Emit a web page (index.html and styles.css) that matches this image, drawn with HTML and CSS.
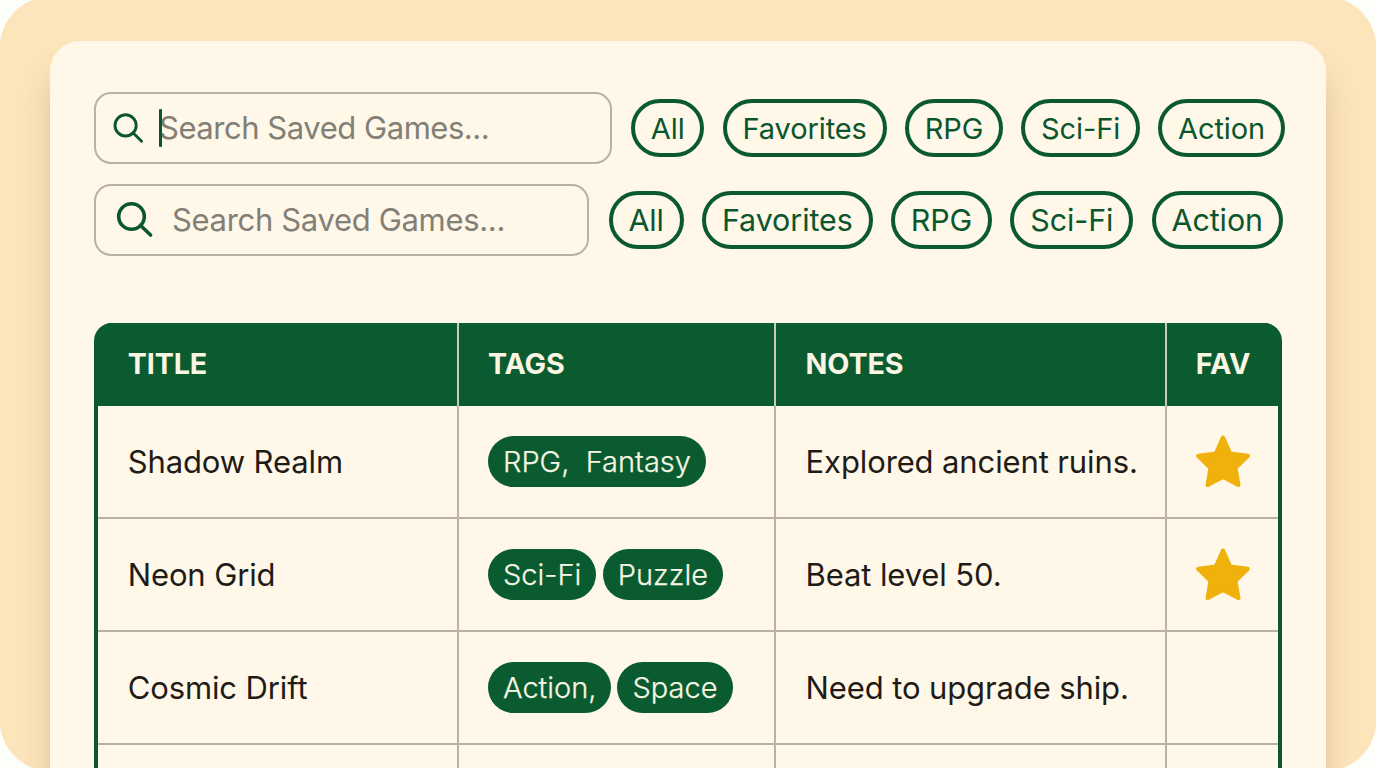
FILE: index.html
```html
<!DOCTYPE html>
<html lang="en">
<head>
<meta charset="utf-8">
<title>Saved Games</title>
<link rel="stylesheet" href="styles.css">
</head>
<body>
<div class="frame">
  <main class="panel">
    <div class="toolbar toolbar-active">
      <div class="search">
        <svg class="search-icon" viewBox="0 0 32 32"><circle cx="13.6" cy="13.4" r="10.6"/><path d="M21.2 21 29.6 29.2"/></svg>
        <span class="placeholder">Search Saved Games...<span class="caret"></span></span>
      </div>
      <div class="chips">
        <span class="chip">All</span>
        <span class="chip">Favorites</span>
        <span class="chip">RPG</span>
        <span class="chip">Sci-Fi</span>
        <span class="chip">Action</span>
      </div>
    </div>
    <div class="toolbar toolbar-large">
      <div class="search">
        <svg class="search-icon" viewBox="0 0 38 38"><circle cx="15.5" cy="15.5" r="12.8"/><path d="M24.8 24.8 34.6 34"/></svg>
        <span class="placeholder">Search Saved Games...</span>
      </div>
      <div class="chips">
        <span class="chip">All</span>
        <span class="chip">Favorites</span>
        <span class="chip">RPG</span>
        <span class="chip">Sci-Fi</span>
        <span class="chip">Action</span>
      </div>
    </div>
    <div class="table">
      <div class="row head">
        <div class="cell">TITLE</div><div class="cell">TAGS</div><div class="cell">NOTES</div><div class="cell fav">FAV</div>
      </div>
      <div class="row">
        <div class="cell">Shadow Realm</div>
        <div class="cell"><span class="tag">RPG,  Fantasy</span></div>
        <div class="cell">Explored ancient ruins.</div>
        <div class="cell fav"><svg class="star" viewBox="228 375 162 158"><path d="M309 383 330 431 383 438 346 474 355 525 309 501 263 525 272 474 235 438 288 431Z"/></svg></div>
      </div>
      <div class="row">
        <div class="cell">Neon Grid</div>
        <div class="cell"><span class="tag">Sci-Fi</span><span class="tag">Puzzle</span></div>
        <div class="cell">Beat level 50.</div>
        <div class="cell fav"><svg class="star" viewBox="228 375 162 158"><path d="M309 383 330 431 383 438 346 474 355 525 309 501 263 525 272 474 235 438 288 431Z"/></svg></div>
      </div>
      <div class="row">
        <div class="cell">Cosmic Drift</div>
        <div class="cell"><span class="tag tag-open">Action,</span><span class="tag">Space</span></div>
        <div class="cell">Need to upgrade ship.</div>
        <div class="cell fav"></div>
      </div>
      <div class="row">
        <div class="cell"></div><div class="cell"></div><div class="cell"></div><div class="cell fav"></div>
      </div>
    </div>
  </main>
</div>
</body>
</html>
```
FILE: styles.css
```css
* { box-sizing: border-box; }
html, body { height: 100%; }
body {
  margin: 0;
  overflow: hidden;
  background: #fcfff9;
  font-family: Inter, "Liberation Sans", sans-serif;
  color: #1f1c17;
}
.frame {
  height: 774px;
  margin-top: -3px;
  padding: 44px 50px 0;
  border-radius: 50px;
  background: #fce4bb;
  overflow: hidden;
}
.panel {
  height: 900px;
  padding: 51px 40px 0 44px;
  border-radius: 30px;
  background: #fff7e8;
  box-shadow: 0 30px 28px rgba(145, 110, 45, .27);
}
.toolbar { display: flex; align-items: center; height: 72px; }
.search {
  display: flex;
  flex: none;
  align-items: center;
  height: 72px;
  border: 2px solid #bab0a4;
  border-radius: 17px;
}
.search-icon {
  fill: none;
  stroke: #0a562e;
  stroke-linecap: round;
  flex: none;
}
.placeholder {
  position: relative;
  font-size: 31px;
  line-height: 38px;
  color: #827f76;
  white-space: nowrap;
}
.caret {
  position: absolute;
  left: 0;
  top: 0;
  width: 3px;
  height: 38px;
  border-radius: 1px;
  background: #0a562e;
}
.chips { display: flex; flex: none; gap: 18.3px; }
.chip {
  display: flex;
  align-items: center;
  height: 58px;
  padding: 0 15.8px;
  border: 4px solid #0a592f;
  border-radius: 29px;
  color: #0a562e;
  letter-spacing: -.1px;
  white-space: nowrap;
}
.toolbar-active .search { width: 518px; margin-right: 19px; padding-left: 16px; }
.toolbar-active .search-icon { width: 32px; height: 32px; margin-right: 15px; stroke-width: 2.9; }
.toolbar-active .placeholder { letter-spacing: -.46px; }
.toolbar-active .chip { font-size: 29px; }
.toolbar-large { margin-top: 19.5px; }
.toolbar-large .search { width: 495px; margin-right: 19.5px; padding-left: 19.5px; }
.toolbar-large .search-icon { width: 38px; height: 38px; margin-right: 18.5px; stroke-width: 3.6; }
.toolbar-large .placeholder { letter-spacing: -.33px; }
.toolbar-large .chip { padding: 0 15.9px; font-size: 30.4px; letter-spacing: -.06px; }
.table {
  width: 1188px;
  height: 600px;
  margin-top: 67px;
  border: 4px solid #0a592f;
  border-top: 0;
  border-radius: 18px 18px 0 0;
  background: linear-gradient(#0a5c30 60px, transparent 60px);
  overflow: hidden;
}
.row {
  display: grid;
  grid-template-columns: 361px 317px 391px 111px;
  height: 113px;
  font-size: 31px;
  letter-spacing: -.12px;
}
.cell {
  display: flex;
  align-items: center;
  gap: 6.5px;
  padding: 0 0 0 29px;
  border-right: 2px solid #bab0a4;
  border-bottom: 2px solid #bab0a4;
  white-space: nowrap;
}
.cell:first-child { padding-left: 29.7px; }
.cell:nth-child(3) { padding-left: 29.6px; }
.cell.fav { justify-content: center; padding: 0; border-right: 0; }
.head {
  height: 83px;
  background: #0a5c30;
  color: #fbf6e4;
  font-size: 28.7px;
  font-weight: 700;
}
.head .cell { border-bottom: 0; border-right-color: #c9ccb6; padding-bottom: 1px; }
.head .cell.fav { padding-left: 1px; }
.tag {
  height: 51px;
  padding: 0 15px;
  border-radius: 26px;
  background: #0a5c30;
  color: #f7f6e4;
  font-size: 29px;
  font-weight: 300;
  letter-spacing: 0;
  line-height: 51px;
  white-space: pre;
  -webkit-text-stroke: .25px #f7f6e4;
}
.tag-open { padding-right: 14.5px; }
.star {
  width: 54px;
  height: 52.6px;
  fill: #f0b10c;
  stroke: #f0b10c;
  stroke-width: 13;
  stroke-linejoin: round;
}
```
